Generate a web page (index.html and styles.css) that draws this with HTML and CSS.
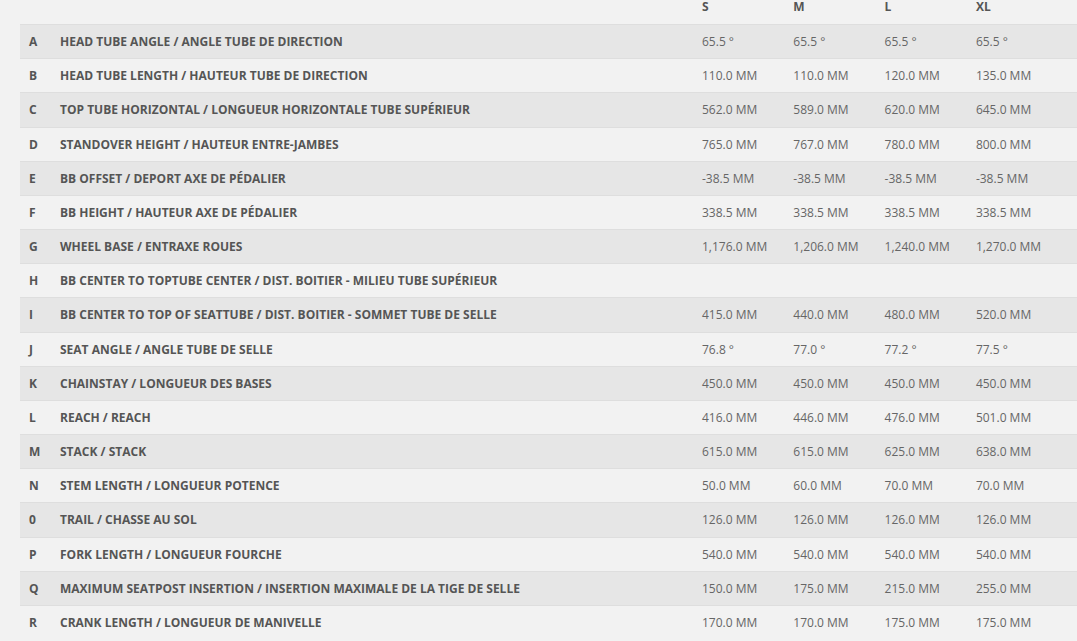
FILE: index.html
```html
<!DOCTYPE html>
<html>
<head>
<meta charset="utf-8">
<link rel="stylesheet" href="styles.css">
</head>
<body>
<div class="geo">
  <div class="row head">
    <div class="c-letter"></div><div class="c-label"></div>
    <div class="c-val">S</div><div class="c-val">M</div><div class="c-val">L</div><div class="c-val">XL</div>
  </div>
  <div class="row odd"><div class="c-letter">A</div><div class="c-label">HEAD TUBE ANGLE / ANGLE TUBE DE DIRECTION</div><div class="c-val">65.5 °</div><div class="c-val">65.5 °</div><div class="c-val">65.5 °</div><div class="c-val">65.5 °</div></div>
  <div class="row"><div class="c-letter">B</div><div class="c-label">HEAD TUBE LENGTH / HAUTEUR TUBE DE DIRECTION</div><div class="c-val">110.0 MM</div><div class="c-val">110.0 MM</div><div class="c-val">120.0 MM</div><div class="c-val">135.0 MM</div></div>
  <div class="row odd"><div class="c-letter">C</div><div class="c-label">TOP TUBE HORIZONTAL / LONGUEUR HORIZONTALE TUBE SUPÉRIEUR</div><div class="c-val">562.0 MM</div><div class="c-val">589.0 MM</div><div class="c-val">620.0 MM</div><div class="c-val">645.0 MM</div></div>
  <div class="row"><div class="c-letter">D</div><div class="c-label">STANDOVER HEIGHT / HAUTEUR ENTRE-JAMBES</div><div class="c-val">765.0 MM</div><div class="c-val">767.0 MM</div><div class="c-val">780.0 MM</div><div class="c-val">800.0 MM</div></div>
  <div class="row odd"><div class="c-letter">E</div><div class="c-label">BB OFFSET / DEPORT AXE DE PÉDALIER</div><div class="c-val">-38.5 MM</div><div class="c-val">-38.5 MM</div><div class="c-val">-38.5 MM</div><div class="c-val">-38.5 MM</div></div>
  <div class="row"><div class="c-letter">F</div><div class="c-label">BB HEIGHT / HAUTEUR AXE DE PÉDALIER</div><div class="c-val">338.5 MM</div><div class="c-val">338.5 MM</div><div class="c-val">338.5 MM</div><div class="c-val">338.5 MM</div></div>
  <div class="row odd"><div class="c-letter">G</div><div class="c-label">WHEEL BASE / ENTRAXE ROUES</div><div class="c-val">1,176.0 MM</div><div class="c-val">1,206.0 MM</div><div class="c-val">1,240.0 MM</div><div class="c-val">1,270.0 MM</div></div>
  <div class="row"><div class="c-letter">H</div><div class="c-label">BB CENTER TO TOPTUBE CENTER / DIST. BOITIER - MILIEU TUBE SUPÉRIEUR</div><div class="c-val"></div><div class="c-val"></div><div class="c-val"></div><div class="c-val"></div></div>
  <div class="row odd"><div class="c-letter">I</div><div class="c-label">BB CENTER TO TOP OF SEATTUBE / DIST. BOITIER - SOMMET TUBE DE SELLE</div><div class="c-val">415.0 MM</div><div class="c-val">440.0 MM</div><div class="c-val">480.0 MM</div><div class="c-val">520.0 MM</div></div>
  <div class="row"><div class="c-letter">J</div><div class="c-label">SEAT ANGLE / ANGLE TUBE DE SELLE</div><div class="c-val">76.8 °</div><div class="c-val">77.0 °</div><div class="c-val">77.2 °</div><div class="c-val">77.5 °</div></div>
  <div class="row odd"><div class="c-letter">K</div><div class="c-label">CHAINSTAY / LONGUEUR DES BASES</div><div class="c-val">450.0 MM</div><div class="c-val">450.0 MM</div><div class="c-val">450.0 MM</div><div class="c-val">450.0 MM</div></div>
  <div class="row"><div class="c-letter">L</div><div class="c-label">REACH / REACH</div><div class="c-val">416.0 MM</div><div class="c-val">446.0 MM</div><div class="c-val">476.0 MM</div><div class="c-val">501.0 MM</div></div>
  <div class="row odd"><div class="c-letter">M</div><div class="c-label">STACK / STACK</div><div class="c-val">615.0 MM</div><div class="c-val">615.0 MM</div><div class="c-val">625.0 MM</div><div class="c-val">638.0 MM</div></div>
  <div class="row"><div class="c-letter">N</div><div class="c-label">STEM LENGTH / LONGUEUR POTENCE</div><div class="c-val">50.0 MM</div><div class="c-val">60.0 MM</div><div class="c-val">70.0 MM</div><div class="c-val">70.0 MM</div></div>
  <div class="row odd"><div class="c-letter">0</div><div class="c-label">TRAIL / CHASSE AU SOL</div><div class="c-val">126.0 MM</div><div class="c-val">126.0 MM</div><div class="c-val">126.0 MM</div><div class="c-val">126.0 MM</div></div>
  <div class="row"><div class="c-letter">P</div><div class="c-label">FORK LENGTH / LONGUEUR FOURCHE</div><div class="c-val">540.0 MM</div><div class="c-val">540.0 MM</div><div class="c-val">540.0 MM</div><div class="c-val">540.0 MM</div></div>
  <div class="row odd"><div class="c-letter">Q</div><div class="c-label">MAXIMUM SEATPOST INSERTION / INSERTION MAXIMALE DE LA TIGE DE SELLE</div><div class="c-val">150.0 MM</div><div class="c-val">175.0 MM</div><div class="c-val">215.0 MM</div><div class="c-val">255.0 MM</div></div>
  <div class="row"><div class="c-letter">R</div><div class="c-label">CRANK LENGTH / LONGUEUR DE MANIVELLE</div><div class="c-val">170.0 MM</div><div class="c-val">170.0 MM</div><div class="c-val">175.0 MM</div><div class="c-val">175.0 MM</div></div>
</div>
</body>
</html>
```
FILE: styles.css
```css
html, body {
  margin: 0;
  padding: 0;
  background: #f2f2f2;
  overflow: hidden;
}
.geo {
  margin-left: 20px;
  width: 1070px;
  font-family: "Open Sans", "Noto Sans", sans-serif;
  font-size: 12px;
  color: #666;
}
.row {
  display: flex;
  align-items: center;
  height: 34.18px;
  box-sizing: border-box;
  border-top: 1px solid #dedede;
}
.row.odd {
  background: #e6e6e6;
}
.row.head {
  height: 24px;
  border-top: none;
  align-items: flex-start;
  line-height: 14px;
  font-weight: 700;
  color: #555;
}
.c-letter {
  width: 40px;
  padding-left: 9px;
  box-sizing: border-box;
  font-weight: 700;
  color: #555;
}
.c-label {
  width: 642px;
  font-weight: 700;
  color: #555;
  white-space: nowrap;
}
.c-val {
  width: 91.3px;
  white-space: nowrap;
}
```
